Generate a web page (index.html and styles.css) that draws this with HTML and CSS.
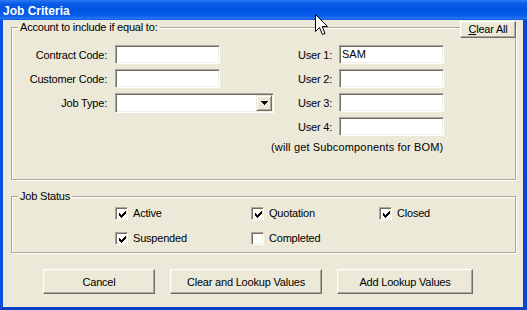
FILE: index.html
```html
<!DOCTYPE html>
<html>
<head>
<meta charset="utf-8">
<title>Job Criteria</title>
<link rel="stylesheet" href="styles.css">
</head>
<body>
<div class="window">
  <div class="titlebar">Job Criteria</div>
  <div class="client">
    <div class="group group-account">
      <span class="legend">Account to include if equal to:</span>
      <button class="btn btn-clearall"><u>C</u>lear All</button>
      <div class="account-body">
        <div class="form-grid left-grid">
          <label class="lbl">Contract Code:</label><div class="field"></div>
          <label class="lbl">Customer Code:</label><div class="field"></div>
          <label class="lbl">Job Type:</label>
          <div class="combo">
            <div class="combo-btn">
              <svg width="7" height="4" viewBox="0 0 7 4" shape-rendering="crispEdges"><path d="M0 0H7V1H6V2H5V3H4V4H3V3H2V2H1V1H0Z" fill="#000"/></svg>
            </div>
          </div>
        </div>
        <div class="form-grid right-grid">
          <label class="lbl">User 1:</label><div class="field">SAM</div>
          <label class="lbl">User 2:</label><div class="field"></div>
          <label class="lbl">User 3:</label><div class="field"></div>
          <label class="lbl">User 4:</label><div class="field"></div>
          <div class="note">(will get Subcomponents for BOM)</div>
        </div>
      </div>
    </div>

    <div class="group group-status">
      <span class="legend">Job Status</span>
      <div class="checks">
        <div class="check"><span class="box checked"><svg width="9" height="9" viewBox="0 0 9 9" shape-rendering="crispEdges"><path d="M1 3H2V4H3V5H4V4H5V3H6V2H7V1H8V4H7V5H6V6H5V7H4V8H3V7H2V6H1Z" fill="#000"/></svg></span>Active</div>
        <div class="check"><span class="box checked"><svg width="9" height="9" viewBox="0 0 9 9" shape-rendering="crispEdges"><path d="M1 3H2V4H3V5H4V4H5V3H6V2H7V1H8V4H7V5H6V6H5V7H4V8H3V7H2V6H1Z" fill="#000"/></svg></span>Quotation</div>
        <div class="check"><span class="box checked"><svg width="9" height="9" viewBox="0 0 9 9" shape-rendering="crispEdges"><path d="M1 3H2V4H3V5H4V4H5V3H6V2H7V1H8V4H7V5H6V6H5V7H4V8H3V7H2V6H1Z" fill="#000"/></svg></span>Closed</div>
        <div class="check"><span class="box checked"><svg width="9" height="9" viewBox="0 0 9 9" shape-rendering="crispEdges"><path d="M1 3H2V4H3V5H4V4H5V3H6V2H7V1H8V4H7V5H6V6H5V7H4V8H3V7H2V6H1Z" fill="#000"/></svg></span>Suspended</div>
        <div class="check"><span class="box"></span>Completed</div>
      </div>
    </div>

    <div class="actions">
      <button class="btn btn-cancel">Cancel</button>
      <button class="btn btn-clear">Clear and Lookup Values</button>
      <button class="btn btn-add">Add Lookup Values</button>
    </div>
  </div>
  <svg class="cursor" width="13" height="22" viewBox="0 0 13 22">
    <path d="M0.5 0.5V17.5L4.5 13.5L7.5 20.5L10 19.5L7.2 12.5H12.5Z" fill="#fff" stroke="#000" stroke-width="1"/>
  </svg>
</div>
</body>
</html>
```

FILE: styles.css
```css
body {
  margin: 0;
  font-family: "Liberation Sans", Arial, sans-serif;
  font-size: 11px;
  color: #000;
}

.window {
  position: relative;
  width: 527px;
  height: 310px;
  background: #ECE9D8;
  overflow: hidden;
}

.titlebar {
  box-sizing: border-box;
  height: 20px;
  padding: 2px 0 0 3px;
  line-height: 18px;
  font-size: 12px;
  font-weight: bold;
  color: #fff;
  background: linear-gradient(to bottom, #2a78f2 0%, #0a5ce6 18%, #0054e3 50%, #0a5eec 78%, #2574f2 94%, #0a4fd6 100%);
}

.client {
  box-sizing: border-box;
  height: 290px;
  border-left: 3px solid #0b4fe0;
  border-right: 4px solid #0845d2;
  border-bottom: 3px solid #0840c8;
  padding: 7px 0 0 8px;
}

.group {
  position: relative;
  box-sizing: border-box;
  width: 505px;
  border: 1px solid #aca899;
  box-shadow: inset 1px 1px 0 #fff, 1px 1px 0 #fff;
}

.legend {
  position: absolute;
  top: -7px;
  left: 6px;
  padding: 0 2px;
  line-height: 13px;
  background: #ECE9D8;
  letter-spacing: -0.2px;
}

.group-account {
  height: 153px;
  padding-top: 17px;
}

.btn {
  box-sizing: border-box;
  margin: 0;
  padding: 0;
  font-family: inherit;
  font-size: 11px;
  color: #000;
  background: #ECE9D8;
  border: 1px solid;
  border-color: #fff #716f64 #716f64 #fff;
  box-shadow: inset -1px -1px 0 #aca899, inset 1px 1px 0 #f1efe2;
  letter-spacing: -0.2px;
}

.btn-clearall {
  position: absolute;
  top: -7px;
  right: -1px;
  width: 56px;
  height: 17px;
  line-height: 13px;
}

.account-body {
  display: flex;
}

.form-grid {
  display: grid;
  row-gap: 5px;
  align-items: center;
}

.left-grid {
  grid-template-columns: 95px 159px;
  grid-template-rows: 19px 19px 20px;
  column-gap: 8px;
}

.right-grid {
  margin-left: 8px;
  grid-template-columns: 50px 105px;
  grid-template-rows: repeat(4, 19px) 13px;
  column-gap: 7px;
}

.lbl {
  justify-self: end;
  text-align: right;
  white-space: nowrap;
  letter-spacing: -0.2px;
}

.field,
.combo {
  box-sizing: border-box;
  background: #fff;
  border: 1px solid;
  border-color: #aca899 #fff #fff #aca899;
  box-shadow: inset 1px 1px 0 #716f64, inset -1px -1px 0 #f1efe2;
}

.field {
  width: 105px;
  height: 19px;
  padding: 0 2px;
  line-height: 17px;
}

.combo {
  width: 159px;
  height: 20px;
  padding: 1px;
  display: flex;
  justify-content: flex-end;
}

.combo-btn {
  box-sizing: border-box;
  width: 16px;
  height: 16px;
  background: #ECE9D8;
  border: 1px solid;
  border-color: #ECE9D8 #716f64 #716f64 #ECE9D8;
  box-shadow: inset 1px 1px 0 #fff, inset -1px -1px 0 #aca899;
  display: flex;
  align-items: center;
  justify-content: center;
}

.note {
  grid-column: 1 / -1;
  margin-left: -11px;
  line-height: 13px;
  white-space: nowrap;
  letter-spacing: 0.15px;
}

.group-status {
  margin-top: 16px;
  height: 57px;
  padding: 10px 0 0 103px;
}

.checks {
  display: grid;
  grid-template-columns: 136px 128px auto;
  grid-auto-rows: 13px;
  row-gap: 12px;
}

.check {
  display: flex;
  align-items: center;
  gap: 5px;
  line-height: 13px;
  white-space: nowrap;
  letter-spacing: -0.2px;
}

.box {
  box-sizing: border-box;
  flex: none;
  width: 13px;
  height: 13px;
  background: #fff;
  border: 1px solid;
  border-color: #aca899 #fff #fff #aca899;
  box-shadow: inset 1px 1px 0 #716f64, inset -1px -1px 0 #f1efe2;
  display: flex;
  align-items: center;
  justify-content: center;
}

.box svg {
  display: block;
  margin: 1px 0 0 1px;
}

.actions {
  display: flex;
  gap: 15px;
  margin-top: 16px;
  padding-left: 32px;
}

.actions .btn {
  height: 25px;
}

.btn-cancel { width: 112px; }
.btn-clear { width: 152px; }
.btn-add { width: 136px; }

.cursor {
  position: absolute;
  left: 315px;
  top: 14px;
}
```
